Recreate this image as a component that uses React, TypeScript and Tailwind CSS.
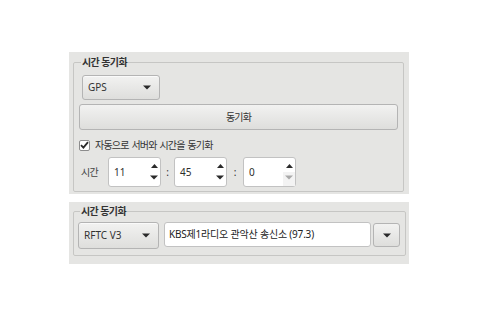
const FONT = "font-['Noto_Sans','Noto_Sans_CJK_KR',sans-serif]";

function DownTri({ className = "fill-[#2a2a2a]" }: { className?: string }) {
  return (
    <svg width="8" height="5" viewBox="0 0 8 5" className={className}>
      <path d="M0 0.5h8L4 4.5z" />
    </svg>
  );
}

function UpTri({ className = "fill-[#2a2a2a]" }: { className?: string }) {
  return (
    <svg width="7" height="4" viewBox="0 0 7 4" className={className}>
      <path d="M0 4h7L3.5 0z" />
    </svg>
  );
}

function Combo({ label, width, height }: { label: string; width: string; height: string }) {
  return (
    <div
      className={`${width} ${height} flex items-center justify-between pl-[5px] pr-[8px] rounded-[3px] border border-[#b4b4b4] bg-gradient-to-b from-[#f2f2f1] to-[#dededc] text-[10px] text-[#333] shadow-[inset_0_1px_0_#fafafa]`}
    >
      <span>{label}</span>
      <DownTri />
    </div>
  );
}

function Spin({ value, downDisabled }: { value: string; downDisabled?: boolean }) {
  return (
    <div className="w-[53px] h-[30px] flex rounded-[3px] border border-[#c2c2c2] bg-white">
      <div className="flex-1 flex items-center pl-[5px] text-[10px] text-[#2e2e2e]">{value}</div>
      <div className="w-[12px] flex flex-col">
        <div className="flex-1 flex items-center justify-center pt-[2px]">
          <UpTri />
        </div>
        <div className={`flex-1 flex items-center justify-center pb-[3px] ${downDisabled ? "bg-[#f3f3f3]" : ""}`}>
          <DownTri className={downDisabled ? "fill-[#a9a9a9]" : "fill-[#2a2a2a]"} />
        </div>
      </div>
    </div>
  );
}

export default function App() {
  return (
    <div className={`min-h-screen bg-white pt-[52px] pl-[69px] ${FONT} text-[#2e2e2e]`}>
      {/* first group */}
      <div className="w-[340px] bg-[#e5e5e3] pl-[4px] pr-[5px] pt-[3px] pb-[2px]">
        <fieldset className="border border-[#c6c6c4] rounded-[2px] px-[5px] pb-[4px]">
          <legend className="ml-[2px] px-[1px] text-[10px] leading-[14px] font-bold tracking-[-0.6px] text-[#333]">시간 동기화</legend>
          <div className="mt-[6px] ml-[3px]">
            <Combo label="GPS" width="w-[78px]" height="h-[25px]" />
          </div>
          <div className="mt-[4px] h-[26px] flex items-center justify-center rounded-[3px] border border-[#b4b4b4] bg-gradient-to-b from-[#f2f2f1] to-[#dededc] text-[10px] tracking-[-0.8px] text-[#333]">
            동기화
          </div>
          <div className="mt-[8px] h-[14px] flex items-center gap-[5px]">
            <div className="w-[11px] h-[11px] flex items-center justify-center rounded-[2px] border border-[#8c8c8c] bg-white">
              <svg width="9" height="8" viewBox="0 0 9 8">
                <path d="M1 4.2l2.4 2.4L8 1.2" stroke="#2a2a2a" strokeWidth="1.8" fill="none" />
              </svg>
            </div>
            <span className="text-[10px] tracking-[-0.8px] [word-spacing:1px] text-[#333]">자동으로 서버와 시간을 동기화</span>
          </div>
          <div className="mt-[5px] flex items-center">
            <span className="w-[29px] pl-[2px] text-[10px] tracking-[-0.6px] text-[#444]">시간</span>
            <Spin value="11" />
            <span className="w-[13px] text-center text-[10px]">:</span>
            <Spin value="45" />
            <span className="w-[16px] text-center text-[10px]">:</span>
            <Spin value="0" downDisabled />
          </div>
        </fieldset>
      </div>

      {/* second group */}
      <div className="mt-[8px] w-[340px] bg-[#e5e5e3] pl-[4px] pr-[4px] pt-[2px] pb-[8px]">
        <fieldset className="border border-[#c6c6c4] rounded-[2px] pl-[4px] pr-[5px] pb-[6px]">
          <legend className="ml-[2px] px-[1px] text-[10px] leading-[14px] font-bold tracking-[-0.6px] text-[#333]">시간 동기화</legend>
          <div className="mt-[4px] flex items-start">
            <Combo label="RFTC V3" width="w-[81px]" height="h-[27px]" />
            <div className="ml-[5px] w-[207px] h-[25px] flex items-center pl-[4px] rounded-[3px] border border-[#c2c2c2] bg-white text-[10px] tracking-[-0.2px] text-[#222]">
              KBS제1라디오 관악산 송신소 (97.3)
            </div>
            <div className="ml-[2px] mt-[1px] w-[27px] h-[24px] flex items-center justify-center rounded-[3px] border border-[#b4b4b4] bg-gradient-to-b from-[#f2f2f1] to-[#dededc]">
              <DownTri />
            </div>
          </div>
        </fieldset>
      </div>
    </div>
  );
}
